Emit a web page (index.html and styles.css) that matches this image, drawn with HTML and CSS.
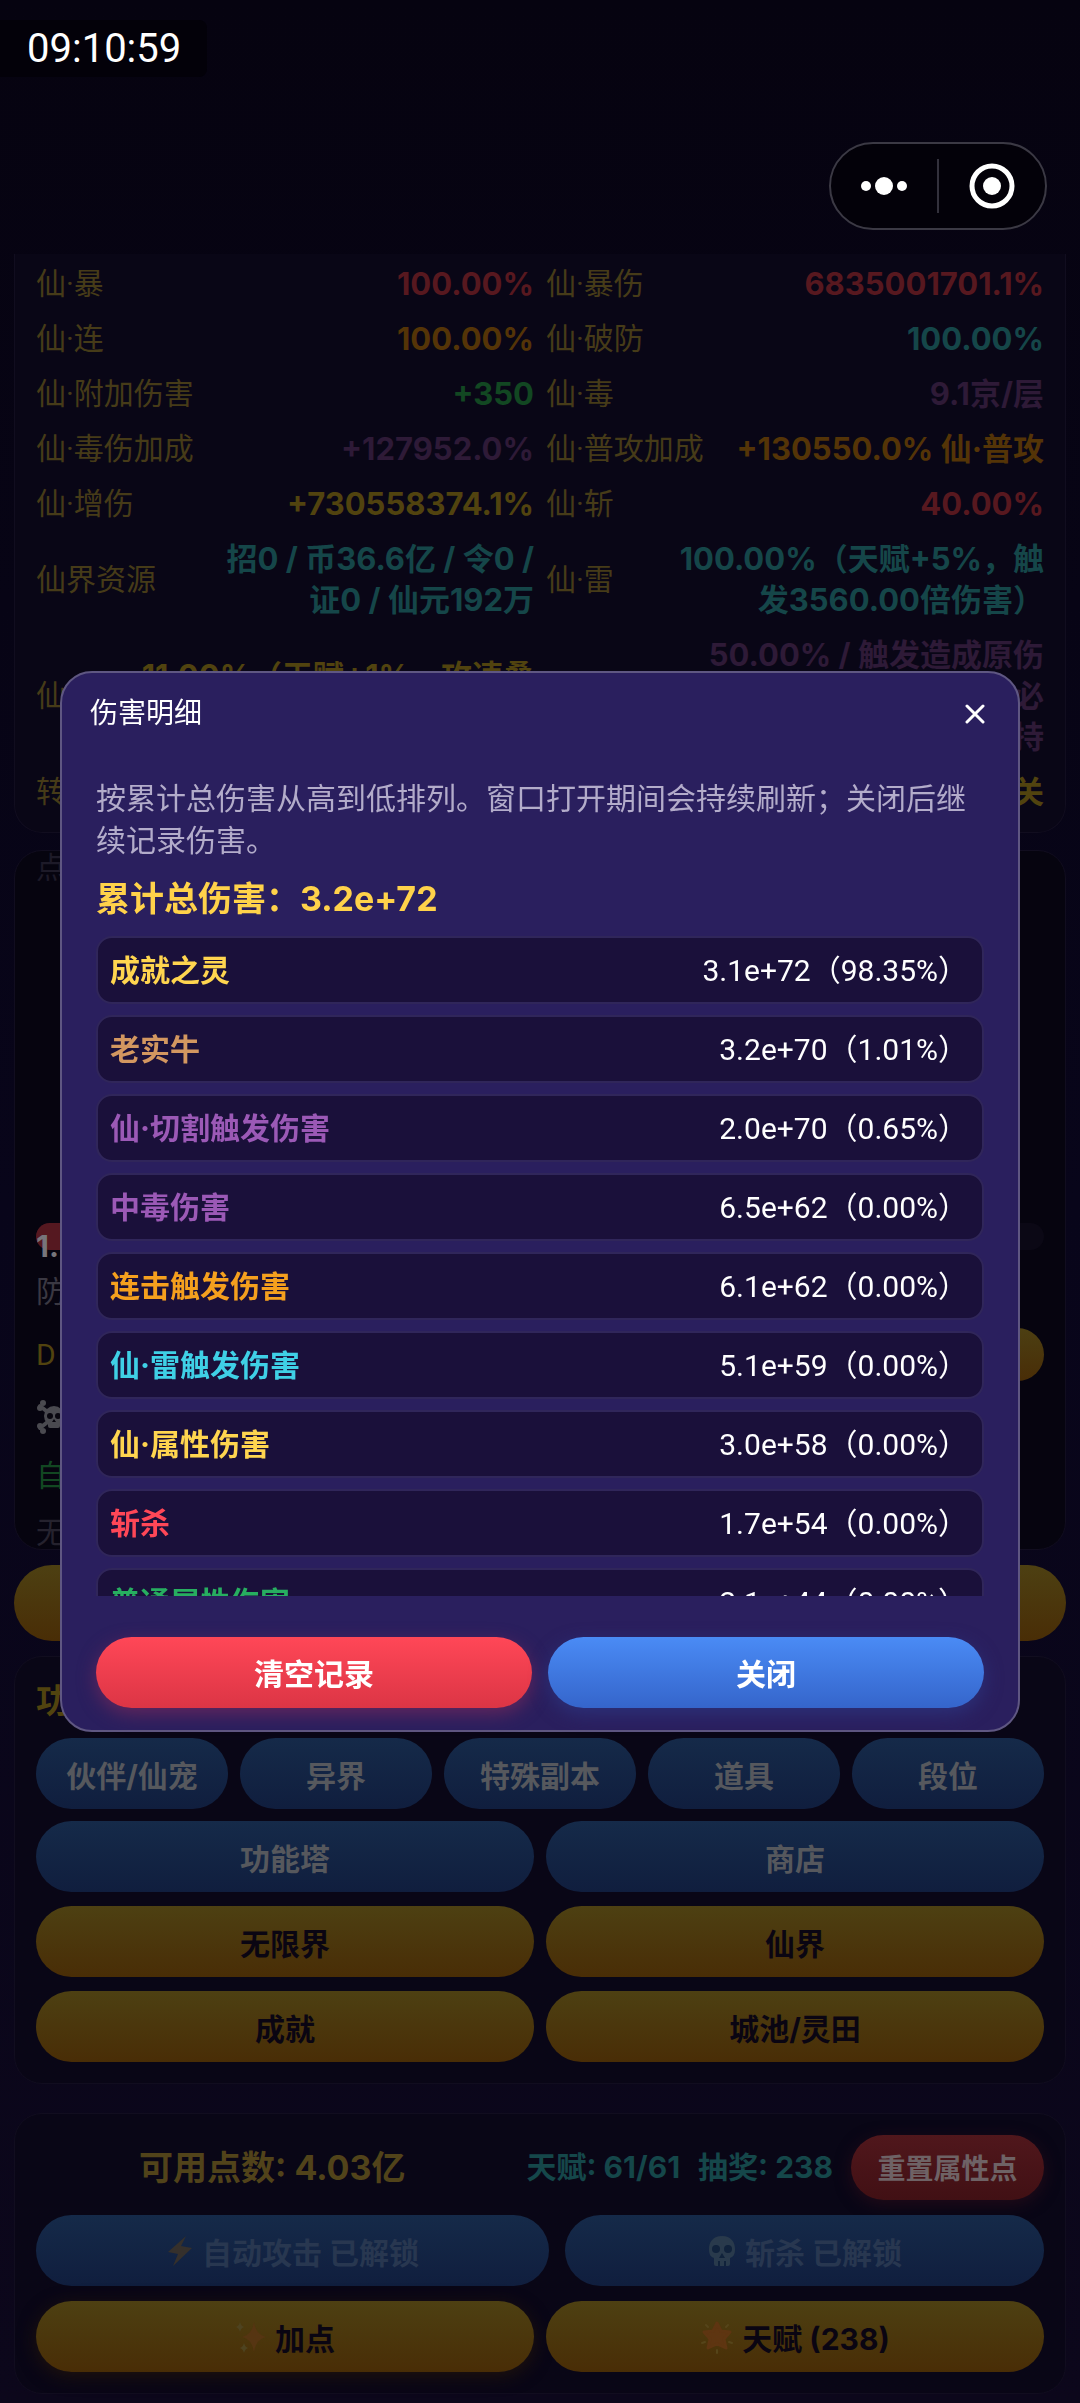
FILE: index.html
```html
<!DOCTYPE html>
<html lang="zh-CN">
<head>
<meta charset="utf-8">
<meta name="viewport" content="width=device-width, initial-scale=1">
<title>伤害明细</title>
<link rel="stylesheet" href="styles.css">
</head>
<body>
<header class="topbar">
  <time class="clock">09:10:59</time>
  <div class="capsule">
    <button class="capsule-btn" type="button" aria-label="更多">
      <svg width="46" height="20" viewBox="0 0 46 20"><circle cx="5" cy="10" r="5"/><circle cx="23" cy="10" r="9"/><circle cx="41" cy="10" r="5"/></svg>
    </button>
    <span class="capsule-line"></span>
    <button class="capsule-btn" type="button" aria-label="退出">
      <svg width="46" height="46" viewBox="0 0 46 46"><circle cx="23" cy="23" r="20" fill="none" stroke="#fff" stroke-width="5"/><circle cx="23" cy="23" r="9"/></svg>
    </button>
  </div>
</header>

<main class="page">
  <section class="card stats">
    <div class="stat"><span>仙·暴</span><b class="red">100.00%</b></div>
    <div class="stat"><span>仙·暴伤</span><b class="red">6835001701.1%</b></div>
    <div class="stat"><span>仙·连</span><b class="orange">100.00%</b></div>
    <div class="stat"><span>仙·破防</span><b class="teal">100.00%</b></div>
    <div class="stat"><span>仙·附加伤害</span><b class="green">+350</b></div>
    <div class="stat"><span>仙·毒</span><b class="purple">9.1京/层</b></div>
    <div class="stat"><span>仙·毒伤加成</span><b class="purple">+127952.0%</b></div>
    <div class="stat"><span>仙·普攻加成</span><b class="orange">+130550.0% 仙·普攻</b></div>
    <div class="stat"><span>仙·增伤</span><b class="yellow">+730558374.1%</b></div>
    <div class="stat"><span>仙·斩</span><b class="red">40.00%</b></div>
    <div class="stat"><span>仙界资源</span><b class="teal">招0 / 币36.6亿 / 令0 /<br>证0 / 仙元192万</b></div>
    <div class="stat"><span>仙·雷</span><b class="teal">100.00%（天赋+5%，触<br>发3560.00倍伤害）</b></div>
    <div class="stat"><span>仙</span><b class="yellow">11.00%（天赋+1%，攻速叠<br>&nbsp;</b></div>
    <div class="stat"><span></span><b class="purple">50.00% / 触发造成原伤<br>必<br>持</b></div>
    <div class="stat"><span>转</span></div>
    <div class="stat"><span></span><b class="yellow">关</b></div>
  </section>

  <section class="card battle">
    <p class="hint">点</p>
    <div class="stage"></div>
    <div class="hp"><div class="hp-fill"><b>1.</b></div></div>
    <p class="line grey">防</p>
    <div class="line-row"><span class="gold-text">D</span><button class="pill-small" type="button" aria-label="DPS"></button></div>
    <p class="line"><svg class="bones" width="36" height="36" viewBox="0 0 36 36"><g stroke="#4a4a50" stroke-width="4" stroke-linecap="round"><path d="M4 7 32 29M4 29 32 7"/></g><g fill="#4a4a50"><circle cx="4" cy="9" r="3"/><circle cx="7" cy="4" r="3"/><circle cx="4" cy="27" r="3"/><circle cx="7" cy="32" r="3"/><circle cx="18" cy="17" r="10"/><rect x="12" y="22" width="12" height="7" rx="2"/></g><g fill="#08060f"><circle cx="14" cy="17" r="3"/><circle cx="22" cy="17" r="3"/><path d="m18 20-2 3h4z"/></g></svg></p>
    <p class="line green">自</p>
    <p class="line dim">无</p>
  </section>

  <button class="btn gold wide" type="button" aria-label="攻击"></button>

  <section class="card features">
    <h2>功</h2>
    <div class="five">
      <button class="btn blue" type="button">伙伴/仙宠</button>
      <button class="btn blue" type="button">异界</button>
      <button class="btn blue" type="button">特殊副本</button>
      <button class="btn blue" type="button">道具</button>
      <button class="btn blue" type="button">段位</button>
    </div>
    <div class="two tight">
      <button class="btn blue" type="button">功能塔</button>
      <button class="btn blue" type="button">商店</button>
    </div>
    <div class="two">
      <button class="btn gold" type="button">无限界</button>
      <button class="btn gold" type="button">仙界</button>
    </div>
    <div class="two">
      <button class="btn gold" type="button">成就</button>
      <button class="btn gold" type="button">城池/灵田</button>
    </div>
  </section>

  <section class="card points">
    <div class="points-head">
      <b class="avail">可用点数: 4.03亿</b>
      <b class="talent"><span>天赋: 61/61</span><span>抽奖: 238</span></b>
      <button class="reset" type="button">重置属性点</button>
    </div>
    <div class="unlocks">
      <button class="btn blue" type="button" disabled>
        <svg width="28" height="32" viewBox="0 0 28 32"><path fill="#35302c" d="M20 1 2 17l10 2L7 31 26 13l-11-2z"/></svg>自动攻击 已解锁</button>
      <button class="btn blue" type="button" disabled>
        <svg width="30" height="32" viewBox="0 0 30 32"><path fill="#293a4c" d="M15 1C6 1 2 7 2 14c0 6 2 8 5 9v6q0 2 2 2h12q2 0 2-2v-6c3-1 5-3 5-9 0-7-4-13-13-13z"/><g fill="#10223b"><circle cx="9" cy="14" r="4"/><circle cx="21" cy="14" r="4"/><path d="m15 18-3 5h6zM11 26h2v5h-2zM17 26h2v5h-2z"/></g></svg>斩杀 已解锁</button>
    </div>
    <div class="two">
      <button class="btn gold glow" type="button">
        <svg width="32" height="32" viewBox="0 0 32 32"><path fill="#563512" d="M19 1q2 13 12 15-10 2-12 15-2-13-12-15 10-2 12-15z"/><path fill="#4e4320" d="M5 1q1 4 4 5-3 1-4 5-1-4-4-5 3-1 4-5zM9 22q1 4 4 5-3 1-4 5-1-4-4-5 3-1 4-5z"/></svg>加点</button>
      <button class="btn gold" type="button">
        <svg width="34" height="34" viewBox="0 0 34 34"><path fill="#5e3511" stroke="#5e3511" stroke-width="3" stroke-linejoin="round" d="m17 3 4 8 9 1-6 7 2 9-9-4-9 4 2-9-6-7 9-1z"/><path stroke="#56451a" stroke-width="2" stroke-linecap="round" d="M6 5l2 2M28 5l-2 2M2 23l3-1M32 23l-3-1M17 33v-3"/></svg>天赋 (238)</button>
    </div>
  </section>
</main>

<div class="overlay">
  <section class="modal" role="dialog" aria-labelledby="modal-title">
    <header class="modal-head">
      <h1 id="modal-title">伤害明细</h1>
      <button class="close" type="button" aria-label="关闭窗口">
        <svg width="20" height="20" viewBox="0 0 20 20"><path d="M2 2 18 18M18 2 2 18" stroke="#fff" stroke-width="3" stroke-linecap="round"/></svg>
      </button>
    </header>
    <div class="modal-body">
      <p class="desc">按累计总伤害从高到低排列。窗口打开期间会持续刷新；关闭后继续记录伤害。</p>
      <p class="total">累计总伤害：3.2e+72</p>
      <ul class="list">
        <li><b class="c-yellow">成就之灵</b><span>3.1e+72（98.35%）</span></li>
        <li><b class="c-bronze">老实牛</b><span>3.2e+70（1.01%）</span></li>
        <li><b class="c-purple">仙·切割触发伤害</b><span>2.0e+70（0.65%）</span></li>
        <li><b class="c-purple">中毒伤害</b><span>6.5e+62（0.00%）</span></li>
        <li><b class="c-orange">连击触发伤害</b><span>6.1e+62（0.00%）</span></li>
        <li><b class="c-cyan">仙·雷触发伤害</b><span>5.1e+59（0.00%）</span></li>
        <li><b class="c-yellow">仙·属性伤害</b><span>3.0e+58（0.00%）</span></li>
        <li><b class="c-red">斩杀</b><span>1.7e+54（0.00%）</span></li>
        <li><b class="c-green">普通属性伤害</b><span>2.1e+44（0.00%）</span></li>
      </ul>
    </div>
    <footer class="modal-foot">
      <button class="btn danger" type="button">清空记录</button>
      <button class="btn primary" type="button">关闭</button>
    </footer>
  </section>
</div>
</body>
</html>
```
FILE: styles.css
```css
* { box-sizing: border-box; }

body {
  margin: 0;
  min-height: 100vh;
  background: linear-gradient(#060310, #08051a 50%, #0c071b);
  color: #fff;
  font-family: Roboto, "Noto Sans CJK SC", sans-serif;
  font-size: 30px;
  line-height: 41px;
}

h1, h2, p, ul { margin: 0; padding: 0; }
b, h2, .btn, .reset, .total { font-family: Inter, "Noto Sans CJK SC", sans-serif; font-weight: 700; }
button { border: 0; padding: 0; color: inherit; cursor: pointer; }
svg { display: block; flex: none; }

/* status area */
.topbar {
  display: flex;
  flex-direction: column;
  align-items: flex-start;
  padding: 20px 0 24px;
  gap: 65px;
}
.clock {
  padding: 0 26px 0 27px;
  border-radius: 0 8px 8px 0;
  background: #030109;
  font-size: 40px;
  line-height: 57px;
}
.capsule {
  align-self: flex-end;
  display: flex;
  align-items: center;
  width: 218px;
  height: 88px;
  margin-right: 33px;
  border: 2px solid #3b3944;
  border-radius: 44px;
  background: #030109;
}
.capsule-btn {
  flex: 1;
  display: grid;
  place-items: center;
  height: 100%;
  background: none;
}
.capsule-btn svg { fill: #fff; }
.capsule-line { width: 2px; height: 54px; background: #33313c; }

/* page cards */
.page {
  display: flex;
  flex-direction: column;
  padding: 0 14px 9px;
}
.card {
  padding: 21px;
  border: 1px solid #110d1f;
  border-radius: 28px;
  background: #090616;
}
.stats {
  display: grid;
  grid-template-columns: 1fr 1fr;
  gap: 14px 12px;
  padding-top: 9px;
  padding-bottom: 20px;
  border-top: 0;
  border-radius: 0 0 28px 28px;
  color: #463b18;
}
.stat {
  display: flex;
  justify-content: space-between;
  align-items: center;
}
.stat b { text-align: right; white-space: nowrap; font-size: 31px; }
.red { color: #57181f; }
.orange { color: #543407; }
.teal { color: #154649; }
.green { color: #124722; }
.purple { color: #2e1a37; }
.yellow { color: #51430f; }

.battle {
  margin-top: 17px;
  padding-top: 0;
  padding-bottom: 0;
  background: #06040f;
}
.hint { color: #1d1a28; line-height: 33px; }
.stage { height: 339px; }
.hp { height: 27px; border-radius: 14px; background: #0b0815; }
.hp-fill { width: 60%; height: 27px; border-radius: 14px; background: #551820; color: #77757b; }
.hp-fill b { line-height: 46px; }
.line { display: flex; align-items: center; height: 58px; }
.grey { margin-top: 12px; color: #3a3842; }
.gold-text { color: #51430f; }
.line-row { display: flex; justify-content: space-between; align-items: center; height: 68px; }
.pill-small { width: 160px; height: 53px; border-radius: 27px; background: linear-gradient(#4c3f12, #492d07); }
.dim { height: 45px; padding-top: 12px; color: #25222e; }

.btn {
  display: flex;
  align-items: center;
  justify-content: center;
  gap: 8px;
  height: 71px;
  border-radius: 38px;
  font-size: 30px;
}
.blue { background: linear-gradient(#152a49, #101e3e); color: #56585d; }
.blue:disabled { color: #283750; }
.gold { background: linear-gradient(#4d4012, #492d06); color: #0a0512; }
.glow { box-shadow: 0 4px 18px #20130c; }
.wide { height: 76px; margin: 15px 0; }

.features { display: flex; flex-direction: column; gap: 14px; }
.features h2 { font-size: 34px; line-height: 46px; color: #51430f; }
.five { display: grid; grid-template-columns: repeat(5, 1fr); gap: 12px; }
.two { display: grid; grid-template-columns: 1fr 1fr; gap: 12px; }
.tight { margin-top: -2px; }

.points {
  display: flex;
  flex-direction: column;
  gap: 15px;
  margin-top: 29px;
  padding-top: 20px;
}
.points-head { display: flex; align-items: center; gap: 18px; height: 66px; }
.avail { flex: 1; text-align: center; font-size: 34px; color: #51431a; }
.talent { display: flex; gap: 18px; color: #15474a; }
.reset {
  width: 193px;
  height: 65px;
  border-radius: 33px;
  background: linear-gradient(#50171c, #411014);
  box-shadow: 0 4px 16px #220b18;
  color: #6e6265;
  font-size: 28px;
}
.unlocks { display: grid; grid-template-columns: 15fr 14fr; gap: 16px; }

/* damage detail dialog */
.overlay {
  position: fixed;
  inset: 0;
  display: grid;
  place-items: center;
  padding: 0 60px;
}
.modal {
  width: 100%;
  border: 2px solid #5f5782;
  border-radius: 32px;
  background: #2a1f5e;
}
.modal-head {
  display: flex;
  align-items: center;
  justify-content: space-between;
  padding: 20px 33px 20px 28px;
}
.modal-head h1 { font-size: 28px; font-weight: 400; }
.close { display: grid; place-items: center; background: none; }
.modal-body {
  height: 35vh;
  padding: 24px 34px 0;
  overflow-y: auto;
  scrollbar-width: none;
}
.desc { color: #b3acca; line-height: 42px; }
.total { margin: 13px 0; font-size: 34px; line-height: 48px; color: #ffd24a; }
.list { display: flex; flex-direction: column; gap: 11px; list-style: none; }
.list li {
  display: flex;
  align-items: center;
  justify-content: space-between;
  height: 68px;
  padding: 0 14px 0 12px;
  border: 2px solid #30265a;
  border-radius: 16px;
  background: #1a103a;
}
.c-yellow { color: #ffd54f; }
.c-bronze { color: #d39760; }
.c-purple { color: #9b59b6; }
.c-orange { color: #f5a01e; }
.c-cyan { color: #3fd0e6; }
.c-red { color: #ff4757; }
.c-green { color: #27ae60; }
.modal-foot {
  display: grid;
  grid-template-columns: 1fr 1fr;
  gap: 16px;
  padding: 41px 34px 22px;
}
.danger { background: linear-gradient(#ff4757, #dc3545); box-shadow: 0 6px 18px #63265c; }
.primary { background: linear-gradient(#4a8bf5, #3565cb); box-shadow: 0 6px 18px #2c3079; }
```
